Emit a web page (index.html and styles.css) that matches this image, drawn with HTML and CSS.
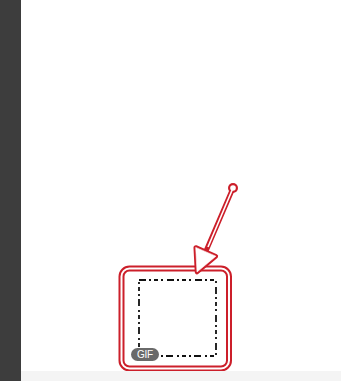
FILE: index.html
```html
<!DOCTYPE html>
<html>
<head>
<meta charset="utf-8">
<link rel="stylesheet" href="styles.css">
</head>
<body>
<div class="app">
  <aside class="sidebar"></aside>
  <main class="main">
    <div class="canvas">
      <svg class="drawing" width="320" height="371" viewBox="0 0 320 371">
        <g class="frame">
          <rect x="100.5" y="268.5" width="107.5" height="100" rx="8" fill="none" stroke="#cc1f2a" stroke-width="6"/>
          <rect x="100.5" y="268.5" width="107.5" height="100" rx="8" fill="none" stroke="#fff" stroke-width="2"/>
        </g>
        <rect x="118" y="280" width="77" height="76" fill="none" stroke="#111" stroke-width="1.8" stroke-dasharray="7 3 2 3 4 3 2 4"/>
        <g class="arrow">
          <line x1="212" y1="188" x2="185" y2="251" stroke="#cc1f2a" stroke-width="5" stroke-linecap="round"/>
          <circle cx="212" cy="188" r="5" fill="#cc1f2a"/>
          <polygon points="176,272 174.7,247.4 194.9,256.2" fill="#cc1f2a" stroke="#cc1f2a" stroke-width="4.5" stroke-linejoin="round"/>
          <line x1="212" y1="188" x2="187" y2="247" stroke="#fff" stroke-width="1.6"/>
          <circle cx="212" cy="188" r="2.8" fill="#fff"/>
          <polygon points="176,272 174.7,247.4 194.9,256.2" fill="#fff" stroke="#fff" stroke-width="0.6" stroke-linejoin="round"/>
        </g>
      </svg>
      <span class="badge">GIF</span>
    </div>
    <div class="footer"></div>
  </main>
</div>
</body>
</html>
```
FILE: styles.css
```css
html, body {
  margin: 0;
  padding: 0;
  background: #fff;
  font-family: "Liberation Sans", Arial, sans-serif;
}
.app {
  display: flex;
  width: 341px;
  height: 381px;
  overflow: hidden;
}
.sidebar {
  width: 21px;
  flex: none;
  background: #3d3d3d;
}
.main {
  flex: 1;
  display: flex;
  flex-direction: column;
}
.canvas {
  position: relative;
  height: 371px;
  background: #fff;
}
.drawing {
  display: block;
}
.footer {
  flex: 1;
  background: #f4f4f4;
}
.badge {
  position: absolute;
  left: 110px;
  top: 348px;
  width: 28px;
  height: 13px;
  border-radius: 7px;
  background: #6a6a6a;
  color: #fff;
  font-size: 10px;
  line-height: 13px;
  text-align: center;
  letter-spacing: -0.3px;
}
```
